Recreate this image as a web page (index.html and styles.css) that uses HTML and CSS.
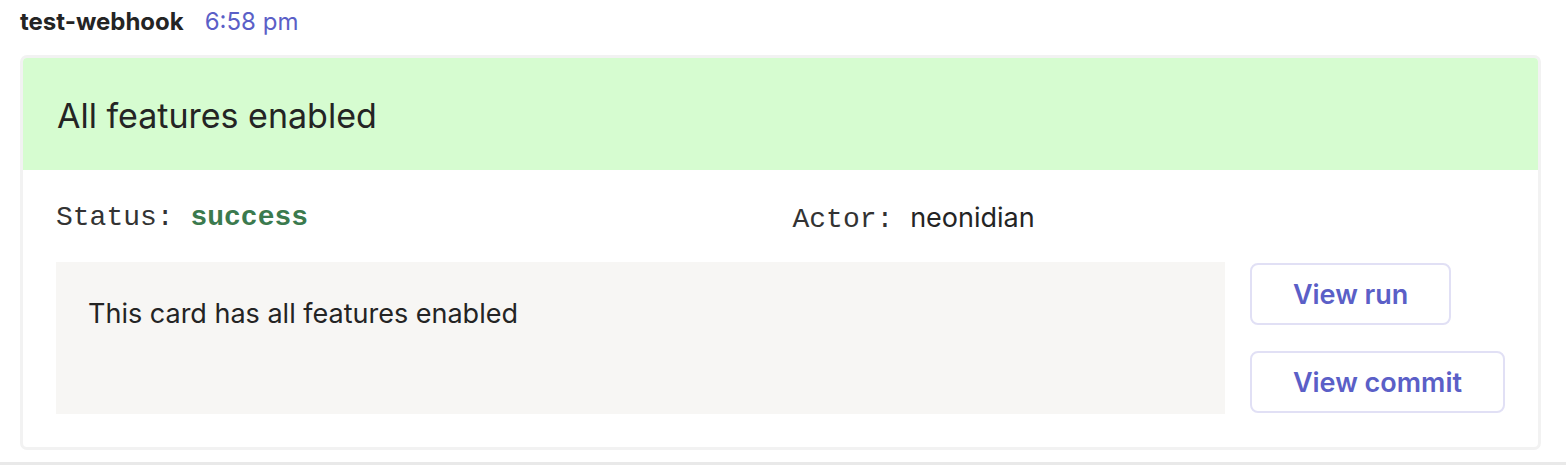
FILE: index.html
```html
<!DOCTYPE html>
<html lang="en">
<head>
<meta charset="utf-8">
<title>test-webhook</title>
<link rel="stylesheet" href="styles.css">
</head>
<body>
<div class="msg">
  <div class="meta">
    <span class="author">test-webhook</span>
    <span class="time">6:58 pm</span>
  </div>
  <div class="card">
    <div class="card-head">All features enabled</div>
    <div class="card-body">
      <div class="facts">
        <div class="fact"><span class="label">Status: </span><span class="success">success</span></div>
        <div class="fact"><span class="label">Actor: </span><span class="value">neonidian</span></div>
      </div>
      <div class="row">
        <div class="note">This card has all features enabled</div>
        <div class="actions">
          <button class="btn btn-run">View run</button>
          <button class="btn">View commit</button>
        </div>
      </div>
    </div>
  </div>
</div>
<div class="divider"></div>
</body>
</html>
```

FILE: styles.css
```css
html, body {
  margin: 0;
  padding: 0;
  background: #ffffff;
}
body {
  font-family: Inter, "Noto Sans", sans-serif;
  color: #242424;
  width: 1566px;
  height: 466px;
  overflow: hidden;
}
.msg {
  padding: 6px 25px 0 20px;
  height: 454px;
  box-sizing: border-box;
}
.meta {
  display: flex;
  align-items: baseline;
  gap: 21px;
  height: 49px;
  line-height: 32px;
}
.author {
  font-size: 24px;
  font-weight: 700;
  color: #242424;
}
.time {
  font-size: 24px;
  color: #5b5fc7;
}
.card {
  border: 3px solid #f2f2f2;
  border-radius: 7px;
  overflow: hidden;
  background: #fff;
}
.card-head {
  background: #d6fcd0;
  height: 112px;
  box-sizing: border-box;
  padding: 3px 34px 0;
  display: flex;
  align-items: center;
  font-size: 34px;
  color: #242424;
}
.card-body {
  padding: 30px 33px 33px 33px;
}
.facts {
  display: grid;
  grid-template-columns: 1fr 1fr;
  gap: 24px;
  line-height: 36px;
  margin-bottom: 24px;
}
.fact {
  display: flex;
  align-items: baseline;
}
.label {
  font-family: "Liberation Mono", "DejaVu Sans Mono", monospace;
  font-size: 28px;
  color: #333333;
  white-space: pre;
}
.success {
  font-family: "Liberation Mono", "DejaVu Sans Mono", monospace;
  font-size: 28px;
  font-weight: 700;
  color: #3b7a4e;
}
.value {
  font-size: 27px;
  color: #242424;
}
.row {
  display: flex;
  gap: 25px;
}
.note {
  flex: 1;
  background: #f7f6f4;
  padding: 35px 32px;
  font-size: 27px;
  line-height: 34px;
  color: #242424;
}
.actions {
  display: flex;
  flex-direction: column;
  align-items: flex-start;
  gap: 26px;
  padding: 1px 0;
}
.btn {
  height: 62px;
  border: 2px solid #e1e0f5;
  border-radius: 8px;
  background: #fff;
  font-family: Inter, "Noto Sans", sans-serif;
  font-size: 27px;
  font-weight: 600;
  color: #5b5fc7;
  padding: 0 41px;
  cursor: pointer;
}
.divider {
  height: 3px;
  background: #e9e9e9;
  margin-top: 8px;
}
```
